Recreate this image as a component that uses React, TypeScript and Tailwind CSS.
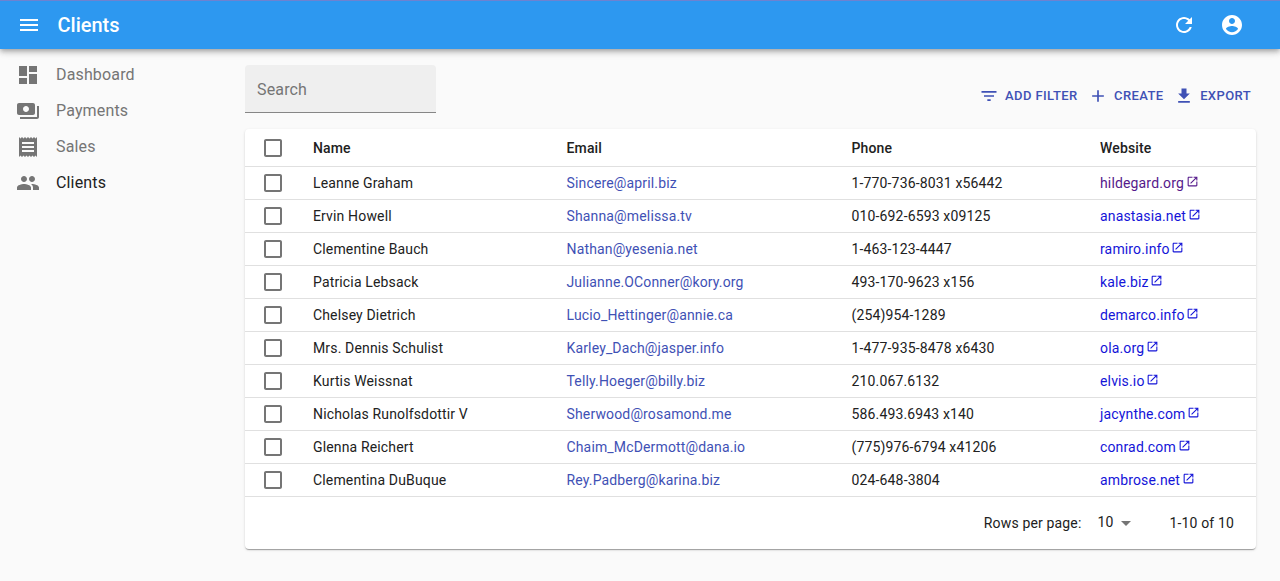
import type { ReactNode } from "react";

const icons = {
  menu: "M3 18h18v-2H3v2zm0-5h18v-2H3v2zm0-7v2h18V6H3z",
  refresh:
    "M17.65 6.35C16.2 4.9 14.21 4 12 4c-4.42 0-7.99 3.58-7.99 8s3.57 8 7.99 8c3.73 0 6.84-2.55 7.73-6h-2.08c-.82 2.33-3.04 4-5.65 4-3.31 0-6-2.69-6-6s2.69-6 6-6c1.66 0 3.14.69 4.22 1.78L13 11h7V4l-2.35 2.35z",
  account:
    "M12 2C6.48 2 2 6.48 2 12s4.48 10 10 10 10-4.48 10-10S17.52 2 12 2zm0 3c1.66 0 3 1.34 3 3s-1.34 3-3 3-3-1.34-3-3 1.34-3 3-3zm0 14.2c-2.5 0-4.71-1.28-6-3.22.03-1.99 4-3.08 6-3.08 1.99 0 5.97 1.09 6 3.08-1.29 1.94-3.5 3.22-6 3.22z",
  dashboard: "M3 13h8V3H3v10zm0 8h8v-6H3v6zm10 0h8V11h-8v10zm0-18v6h8V3h-8z",
  payments:
    "M19 14V6c0-1.1-.9-2-2-2H3c-1.1 0-2 .9-2 2v8c0 1.1.9 2 2 2h14c1.1 0 2-.9 2-2zm-9-1c-1.66 0-3-1.34-3-3s1.34-3 3-3 3 1.34 3 3-1.34 3-3 3zm13-6v11c0 1.1-.9 2-2 2H4v-2h17V7h2z",
  receipt:
    "M18 17H6v-2h12v2zm0-4H6v-2h12v2zm0-4H6V7h12v2zM3 22l1.5-1.5L6 22l1.5-1.5L9 22l1.5-1.5L12 22l1.5-1.5L15 22l1.5-1.5L18 22l1.5-1.5L21 22V2l-1.5 1.5L18 2l-1.5 1.5L15 2l-1.5 1.5L12 2l-1.5 1.5L9 2 7.5 3.5 6 2 4.5 3.5 3 2v20z",
  people:
    "M16 11c1.66 0 2.99-1.34 2.99-3S17.66 5 16 5c-1.66 0-3 1.34-3 3s1.34 3 3 3zm-8 0c1.66 0 2.99-1.34 2.99-3S9.66 5 8 5C6.34 5 5 6.34 5 8s1.34 3 3 3zm0 2c-2.33 0-7 1.17-7 3.5V19h14v-2.5c0-2.33-4.67-3.5-7-3.5zm8 0c-.29 0-.62.02-.97.05 1.16.84 1.97 1.97 1.97 3.45V19h6v-2.5c0-2.33-4.67-3.5-7-3.5z",
  filter: "M10 18h4v-2h-4v2zM3 6v2h18V6H3zm3 7h12v-2H6v2z",
  add: "M19 13h-6v6h-2v-6H5v-2h6V5h2v6h6v2z",
  download: "M19 9h-4V3H9v6H5l7 7 7-7zM5 18v2h14v-2H5z",
  launch:
    "M19 19H5V5h7V3H5c-1.11 0-2 .9-2 2v14c0 1.1.89 2 2 2h14c1.1 0 2-.9 2-2v-7h-2v7zM14 3v2h3.59l-9.83 9.83 1.41 1.41L19 6.41V10h2V3h-7z",
  checkbox:
    "M19 5v14H5V5h14m0-2H5c-1.1 0-2 .9-2 2v14c0 1.1.9 2 2 2h14c1.1 0 2-.9 2-2V5c0-1.1-.9-2-2-2z",
  dropdown: "M7 10l5 5 5-5z",
};

type IconName = keyof typeof icons;

function Icon({ name, className }: { name: IconName; className: string }) {
  return (
    <svg viewBox="0 0 24 24" fill="currentColor" className={`shrink-0 ${className}`}>
      <path d={icons[name]} />
    </svg>
  );
}

const menu: { icon: IconName; label: string; active?: boolean }[] = [
  { icon: "dashboard", label: "Dashboard" },
  { icon: "payments", label: "Payments" },
  { icon: "receipt", label: "Sales" },
  { icon: "people", label: "Clients", active: true },
];

const clients = [
  ["Leanne Graham", "Sincere@april.biz", "1-770-736-8031 x56442", "hildegard.org"],
  ["Ervin Howell", "Shanna@melissa.tv", "010-692-6593 x09125", "anastasia.net"],
  ["Clementine Bauch", "Nathan@yesenia.net", "1-463-123-4447", "ramiro.info"],
  ["Patricia Lebsack", "Julianne.OConner@kory.org", "493-170-9623 x156", "kale.biz"],
  ["Chelsey Dietrich", "Lucio_Hettinger@annie.ca", "(254)954-1289", "demarco.info"],
  ["Mrs. Dennis Schulist", "Karley_Dach@jasper.info", "1-477-935-8478 x6430", "ola.org"],
  ["Kurtis Weissnat", "Telly.Hoeger@billy.biz", "210.067.6132", "elvis.io"],
  ["Nicholas Runolfsdottir V", "Sherwood@rosamond.me", "586.493.6943 x140", "jacynthe.com"],
  ["Glenna Reichert", "Chaim_McDermott@dana.io", "(775)976-6794 x41206", "conrad.com"],
  ["Clementina DuBuque", "Rey.Padberg@karina.biz", "024-648-3804", "ambrose.net"],
];

function Row({ className, children }: { className: string; children: ReactNode }) {
  return (
    <div
      className={`grid grid-cols-[68px_253.5px_285px_248.5px_1fr] items-center border-b border-[#e0e0e0] ${className}`}
    >
      <div className="pl-4">
        <Icon name="checkbox" className="size-6 text-[#757575]" />
      </div>
      {children}
    </div>
  );
}

function Action({ icon, label, className }: { icon: IconName; label: string; className: string }) {
  return (
    <button className={`flex items-center ${className}`}>
      <Icon name={icon} className="size-5" />
      {label}
    </button>
  );
}

export default function App() {
  return (
    <div className="flex h-[581px] flex-col bg-[#fafafa] font-['Roboto',sans-serif] text-[#212121]">
      <header className="z-10 flex h-[49px] shrink-0 items-center border-t border-[#6e82d0] bg-[#2d98f0] pr-9 pl-[17px] text-white shadow-[0_2px_4px_-1px_rgba(0,0,0,0.2),0_4px_5px_rgba(0,0,0,0.14),0_1px_10px_rgba(0,0,0,0.12)]">
        <Icon name="menu" className="size-6" />
        <h1 className="ml-[16.5px] flex-1 text-[20px] leading-8 font-medium">Clients</h1>
        <Icon name="refresh" className="mr-6 size-6" />
        <Icon name="account" className="size-6" />
      </header>

      <div className="flex flex-1">
        <nav className="w-[245px] shrink-0 pt-2">
          {menu.map((m) => (
            <a
              key={m.label}
              className={`flex h-9 items-center gap-4 pl-4 text-[16px] tracking-[0.15px] ${m.active ? "text-[#212121]" : "text-[#757575]"}`}
            >
              <Icon name={m.icon} className="size-6 text-[#757575]" />
              {m.label}
            </a>
          ))}
        </nav>

        <main className="w-[1011px] pt-4">
          <div className="flex items-start justify-between">
            <div className="flex h-12 w-[191px] items-center rounded-t border-b border-[#868686] bg-[#efefef] pt-0.5 pl-3 text-[16px] tracking-[0.15px] text-[#757575]">
              Search
            </div>
            <div className="mt-5 flex pr-[5px] text-[13px] leading-[22px] font-medium tracking-[0.4px] text-[#3f51b5]">
              <Action icon="filter" label="ADD FILTER" className="gap-1.5" />
              <Action icon="add" label="CREATE" className="ml-[10px] gap-[6.5px]" />
              <Action icon="download" label="EXPORT" className="ml-[10.5px] gap-1.5" />
            </div>
          </div>

          <section className="mt-4 h-[420px] rounded bg-white text-[14px] tracking-[0.15px] shadow-[0_2px_1px_-1px_rgba(0,0,0,0.2),0_1px_1px_rgba(0,0,0,0.14),0_1px_3px_rgba(0,0,0,0.12)]">
            <Row className="h-[38px] font-medium">
              <div className="pt-0.5">Name</div>
              <div className="pt-0.5">Email</div>
              <div className="pt-0.5">Phone</div>
              <div className="pt-0.5">Website</div>
            </Row>
            {clients.map(([name, email, phone, site], i) => (
              <Row key={name} className="h-[33px]">
                <div>{name}</div>
                <a className="text-[#3f51b5]">{email}</a>
                <div>{phone}</div>
                <a className={`flex items-center ${i === 0 ? "text-[#551a8b]" : "text-[#1414d8]"}`}>
                  {site}
                  <Icon name="launch" className="mb-[2.5px] ml-[1.75px] size-[13px]" />
                </a>
              </Row>
            ))}
            <div className="flex h-[52px] items-center justify-end pr-[22px]">
              <span>Rows per page:</span>
              <span className="mb-0.5 ml-4">10</span>
              <Icon name="dropdown" className="ml-px size-6 text-[#757575]" />
              <span className="ml-[31px]">1-10 of 10</span>
            </div>
          </section>
        </main>
      </div>
    </div>
  );
}
